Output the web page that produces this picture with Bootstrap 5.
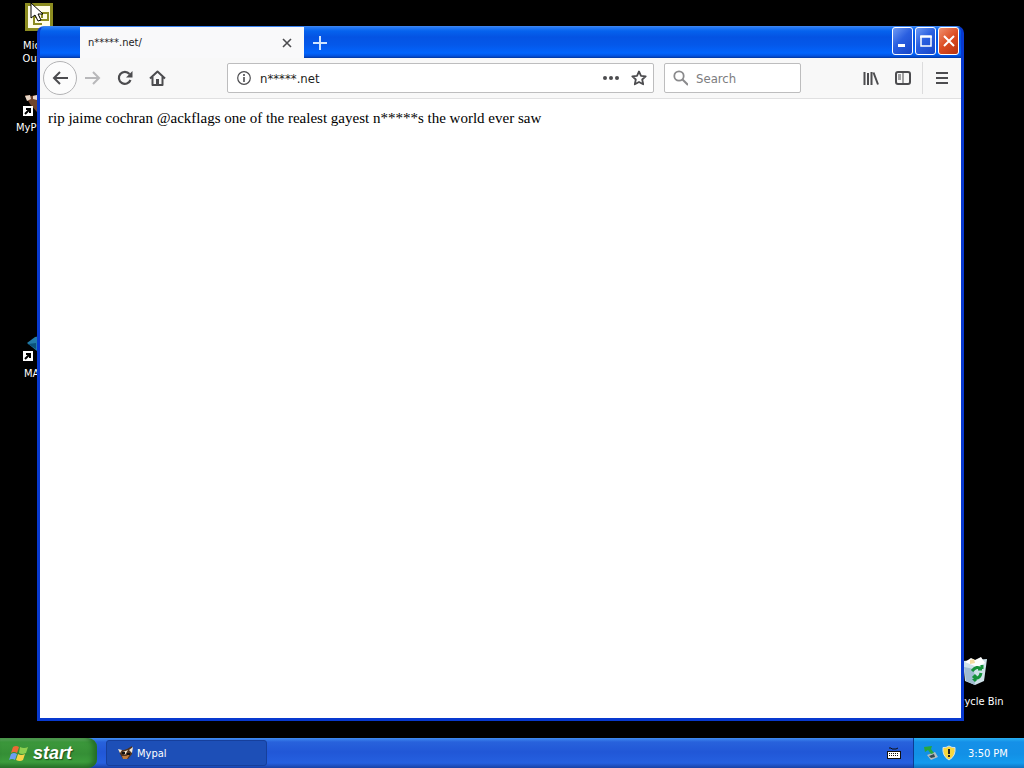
<!DOCTYPE html>
<html lang="en">
<head>
<meta charset="utf-8">
<meta name="viewport" content="width=device-width, initial-scale=1">
<title>Desktop</title>
<link href="https://cdn.jsdelivr.net/npm/bootstrap@5.3.0/dist/css/bootstrap.min.css" rel="stylesheet">
<style>
body{background:#000;font:11px/13px "DejaVu Sans Condensed","Noto Sans",sans-serif;color:#222}
button,input{font-family:inherit}
svg{display:block;flex:none}
.ibtn{border:0;background:none;padding:0;color:#4c4c4f;display:flex;align-items:center;justify-content:center;flex:none;width:32px;height:32px}
/* desktop shortcuts */
.shortcut{position:absolute;width:76px;color:#fff;text-decoration:none;text-align:center;display:flex;flex-direction:column;align-items:center;font-size:11px}
.s-outlook{left:1px;top:0}
.s-mypal,.s-map{left:16px;width:22px;overflow:hidden;align-items:start;white-space:nowrap}
.s-mypal{top:85px}
.s-map{top:331px}
.s-mypal svg,.s-map svg{margin-left:7px}
.s-bin{right:11px;top:655px}
.pointer{position:absolute;left:30px;top:2px;z-index:3}
/* browser window */
.win{position:absolute;left:37px;right:60px;top:26px;bottom:17px;background:#0a49dc;border:solid #0839cf;border-width:1px 3px 3px;border-top-color:#3b83f0;border-radius:7px 7px 0 0;z-index:1;overflow:hidden}
.titlebar{height:31px;background:linear-gradient(#2a7df5 0,#0562ee 4px,#0453e3 10px,#0458ea 18px,#0265fd 26px,#0352de 29px,#02369f 31px)}
.tab{width:224px;margin-left:40px;background:#f9f9fa;padding-left:8px}
.tab .ibtn{height:30px;width:34px}
.caps{gap:2px;padding-right:2px;height:28px}
.cap{width:21px;height:28px;border:1px solid #fff;border-radius:3px;padding:0;background:linear-gradient(135deg,#6f9bf5,#2a5fe0 45%,#1746c8);display:flex;align-items:center;justify-content:center}
.cap.shut{background:linear-gradient(135deg,#f0906f,#dc4c22 50%,#b83310)}
.toolbar{height:41px;background:#f8f8f8;border-bottom:1px solid #e0e0e1;padding-left:3px;padding-right:3px}
.back{width:34px;height:34px;border:1px solid #b3b3b5;border-radius:50%;background:#fcfcfc}
.field{height:30px;background:#fff;border:1px solid #bdbdbe;border-radius:2px;min-width:0}
.field input{border:0;outline:0;background:none;padding:0;min-width:0;width:100%;font-size:13px;color:#1d1d20}
.field input::placeholder{color:#7c7c80;opacity:1}
.field button{width:28px}
.url{margin-left:54px;margin-right:10px;flex:1 1 0}
.find{width:137px;margin-right:54px;padding-left:8px}
.rule{width:1px;height:32px;background:#dcdcdd;margin:0 3px}
.page{background:#fff;padding:9px 8px;font:15px/20px "Liberation Serif",serif;color:#000}
/* taskbar */
.taskbar{height:30px;background:linear-gradient(#3f8cf0 0,#2862dc 4px,#2157d7 14px,#2560e0 25px,#1941a5 30px)}
.start{width:97px;border:0;padding:0 0 0 9px;border-radius:0 9px 9px 0;background:linear-gradient(#6cb56c 0,#3c983c 4px,#358f36 16px,#3c9c3c 24px,#2a752b 30px);box-shadow:inset -4px 0 5px #246d27;color:#fff;font:italic bold 18px/20px "Liberation Sans",sans-serif;text-shadow:1px 1px 1px #1c4d1c;gap:4px}
.task{width:161px;height:26px;margin:2px 0 0 9px;border:1px solid #163f9b;border-radius:3px;background:#1d4fb7;color:#fff;padding:0 0 0 11px;gap:3px;text-align:left}
.tray{width:111px;background:linear-gradient(#28b1f3 0,#1590e8 4px,#1290e6 16px,#139bee 25px,#0f72c0 30px);border-left:1px solid #0b3c94;padding-left:10px;color:#fff}
</style>
</head>
<body>
<div class="vh-100 d-flex flex-column overflow-hidden">
<main class="flex-grow-1 position-relative">
  <a href="#" class="shortcut s-outlook">
    <svg width="28" height="31" viewBox="0 0 28 31"><path fill="#8c8c20" d="M0 3h28v28H0z"/><path fill="#fffde8" d="M3 6h22v22H3z"/><path d="M9 24v-7h6M14 20h9v-7h-6v5M8 24h9" fill="none" stroke="#8c8c20" stroke-width="2"/></svg>
    <span class="mt-2">Micros<br>Outloo</span></a>
  <a href="#" class="shortcut s-mypal">
    <svg width="32" height="32" viewBox="0 0 32 32"><path fill="#70452e" d="M2 10l6 1 6-1 9 3 5 10-14 4-7-8z"/><path fill="#ead8c7" d="M2 11l5-1 1 4-4 2zm8 0l4-1v5l-4-1z"/><path fill="#fff" d="M0 21h10v10H0z"/><path d="M2 29l5-5m-4 0h4v4" fill="none" stroke="#000" stroke-width="2"/></svg>
    <span class="mt-1">MyP</span></a>
  <a href="#" class="shortcut s-map">
    <svg width="32" height="32" viewBox="0 0 32 32"><path fill="#237ba7" d="M4 12l8-6 10-2v16h-8z"/><path fill="#0b5279" d="M5 13l8-1v6z"/><path fill="#fff" d="M0 20h10v10H0z"/><path d="M2 28l5-5m-4 0h4v4" fill="none" stroke="#000" stroke-width="2"/></svg>
    <span class="mt-1 ms-2">MA</span></a>
  <a href="#" class="shortcut s-bin">
    <svg width="26" height="32" viewBox="0 0 26 32"><path fill="#cfe2e9" d="M1 6l24-2-3 22-9 4-10-4z"/><path fill="#fff" d="M3 7l6-4 4 2 6-3 4 6-8 4z"/><path fill="#f3dba1" d="M8 5l4-1 1 4-5 1z"/><path fill="#9fbcd0" d="M2 12l10 2 1 16-9-4z"/><path d="M10 16q5-6 9-2m1 0v-4m0 4h-4M19 18q-1 6-7 5m-1 0l3-3m-3 3l3 3" fill="none" stroke="#15923a" stroke-width="3"/></svg>
    <span class="mt-1 pt-1 text-nowrap">Recycle Bin</span></a>
  <svg class="pointer" width="14" height="20" viewBox="0 0 14 20"><path d="M1 1v15l4-3 3 6 3-1-3-6h5z" fill="#fff" stroke="#000"/></svg>

  <section class="win d-flex flex-column">
    <header class="titlebar d-flex">
      <div class="tab d-flex align-items-center justify-content-between"><span>n*****.net/</span>
        <button class="ibtn" aria-label="Close tab"><svg width="10" height="10"><path d="M1 1l8 8M9 1L1 9" stroke="currentColor" stroke-width="1.6"/></svg></button></div>
      <button class="ibtn h-auto" aria-label="New tab"><svg width="14" height="14"><path d="M7 0v14M0 7h14" stroke="#cfe5ff" stroke-width="2"/></svg></button>
      <div class="caps d-flex ms-auto">
        <button class="cap" aria-label="Minimize"><svg width="15" height="16"><path fill="#fff" d="M3 11h7v3H3z"/></svg></button>
        <button class="cap" aria-label="Maximize"><svg width="12" height="12"><path d="M1 1h10v10H1zM0 2h12" fill="none" stroke="#fff" stroke-width="1.5"/></svg></button>
        <button class="cap shut" aria-label="Close"><svg width="12" height="12"><path d="M1 1l10 10M11 1L1 11" stroke="#fff" stroke-width="2"/></svg></button>
      </div>
    </header>
    <nav class="toolbar d-flex align-items-center">
      <button class="ibtn back" aria-label="Back"><svg width="16" height="14" viewBox="0 0 16 14"><path d="M16 7H2M8 1L2 7l6 6" fill="none" stroke="currentColor" stroke-width="2"/></svg></button>
      <button class="ibtn" aria-label="Forward"><svg width="16" height="14" viewBox="0 0 16 14"><path d="M0 7h14M8 1l6 6-6 6" fill="none" stroke="#b8b8ba" stroke-width="2"/></svg></button>
      <button class="ibtn" aria-label="Reload"><svg width="16" height="16" viewBox="0 0 16 16"><path d="M13.500 10A6 6 0 1 1 12.500 4" fill="none" stroke="currentColor" stroke-width="2.200"/><path d="M15.500 1v6.500H9z" fill="currentColor"/></svg></button>
      <button class="ibtn" aria-label="Home"><svg width="17" height="16" viewBox="0 0 17 16"><path d="M1 8.500L8.500 1.500 16 8.500M3.500 7v8h10V7" fill="none" stroke="currentColor" stroke-width="2" stroke-linejoin="round"/><path d="M7 9h3v6H7z" fill="currentColor"/></svg></button>
      <div class="field url d-flex align-items-center">
        <span class="ibtn"><svg width="14" height="14" viewBox="0 0 14 14"><circle cx="7" cy="7" r="6.300" fill="none" stroke="currentColor" stroke-width="1.200"/><path d="M7 6v5M7 3v2" stroke="currentColor" stroke-width="1.600"/></svg></span>
        <input type="text" aria-label="Address" value="n*****.net">
        <button class="ibtn" aria-label="Page actions"><svg width="16" height="4"><g fill="currentColor"><circle cx="2" cy="2" r="2"/><circle cx="8" cy="2" r="2"/><circle cx="14" cy="2" r="2"/></g></svg></button>
        <button class="ibtn" aria-label="Bookmark"><svg width="16" height="16" viewBox="0 0 16 16"><path d="M8 1.500l2 4.300 4.700.5-3.500 3.200 1 4.800L8 12l-4.200 2.300 1-4.800L1.300 6.300 6 5.800z" fill="none" stroke="currentColor" stroke-width="1.800" stroke-linejoin="round"/></svg></button>
      </div>
      <div class="field find d-flex align-items-center gap-2">
        <svg width="15" height="16" viewBox="0 0 15 16"><path d="M9.500 9.500L15 15" stroke="#8a8a8c" stroke-width="2"/><circle cx="6" cy="6" r="4.700" fill="none" stroke="#8a8a8c" stroke-width="1.800"/></svg>
        <input type="search" aria-label="Search" placeholder="Search"></div>
      <button class="ibtn" aria-label="Library"><svg width="16" height="15" viewBox="0 0 16 15"><path d="M1.500 1v13M5 2v12M8.500 1v13M10.500 1.500L15 13.500" stroke="currentColor" stroke-width="2"/></svg></button>
      <button class="ibtn" aria-label="Sidebar"><svg width="16" height="14" viewBox="0 0 16 14"><rect x="1" y="1" width="14" height="12" rx="2" fill="none" stroke="currentColor" stroke-width="2"/><path d="M8 1v12" stroke="currentColor"/><path d="M3 4h3M3 6h3M3 8h3" stroke="currentColor"/></svg></button>
      <div class="rule"></div>
      <button class="ibtn" aria-label="Menu"><svg width="12" height="12"><path d="M0 1h12M0 6h12M0 11h12" stroke="currentColor" stroke-width="2"/></svg></button>
    </nav>
    <article class="page flex-grow-1">rip jaime cochran @ackflags one of the realest gayest n*****s the world ever saw</article>
  </section>
</main>

<footer class="taskbar d-flex">
  <button class="start d-flex align-items-center"><svg width="20" height="19" viewBox="0 0 20 19"><path fill="#ed6a35" d="M4 3q3-2 6 0L8 9Q5 7 2 9z"/><path fill="#8ed050" d="M11 3q4 2 8 0l-2 6q-4 2-7 0z"/><path fill="#6c9ef2" d="M2 10q3-2 6 0l-2 6q-3-2-6 0z"/><path fill="#f8d348" d="M9 10q3 2 7 0l-2 6q-3 2-7 0z"/></svg>start</button>
  <button class="task d-flex align-items-center"><svg width="16" height="14" viewBox="0 0 16 14"><path fill="#51331f" d="M1 4l5 0 3-1 5-3v8l-4 5H5L2 8z"/><path fill="#f6e8d2" d="M0 3l4 1-2 3zm5 3l5-2-3 5zm6-2l4-3-1 6z"/><path fill="#c07a3b" d="M4 10l4 0 4-2-3 5H5z"/><path fill="#111" d="M4 6h3v2H4zm5 1h3v2H9z"/></svg><span>Mypal</span></button>
  <div class="ms-auto d-flex align-items-center pe-2 me-1"><svg width="14" height="12" viewBox="0 0 14 12"><path d="M2 1h2l1 1h4l2-1" stroke="#111" fill="none"/><path fill="#111" d="M0 4h14v8H0z"/><path fill="#fff" d="M1 5h12v6H1z"/><path d="M2 6.500h10M2 8.500h10" stroke="#111" stroke-dasharray="1 1"/></svg></div>
  <div class="tray d-flex align-items-center">
    <svg width="14" height="16" viewBox="0 0 14 16"><path fill="#b4bec1" d="M3 10l8-3 3 5-7 3z"/><path fill="#35484d" d="M5 11l5-2 1 3-4 1z"/><path fill="#27a73d" d="M0 2l8-1-1 3 3 4-3 1-3-4-3 2z"/></svg>
    <svg class="ms-1" width="14" height="16" viewBox="0 0 14 16"><path d="M7 1q3 2 6 1.500Q14 11 7 15 0 11 1 2.500 4 3 7 1z" fill="#f8d83e" stroke="#d9e3e8"/><path d="M7 4v5M7 10v2" stroke="#222" stroke-width="2"/></svg>
    <span class="ms-2 ps-1 text-nowrap">3:50 PM</span>
  </div>
</footer>
</div>
<script src="https://cdn.jsdelivr.net/npm/bootstrap@5.3.0/dist/js/bootstrap.bundle.min.js"></script>
</body>
</html>
